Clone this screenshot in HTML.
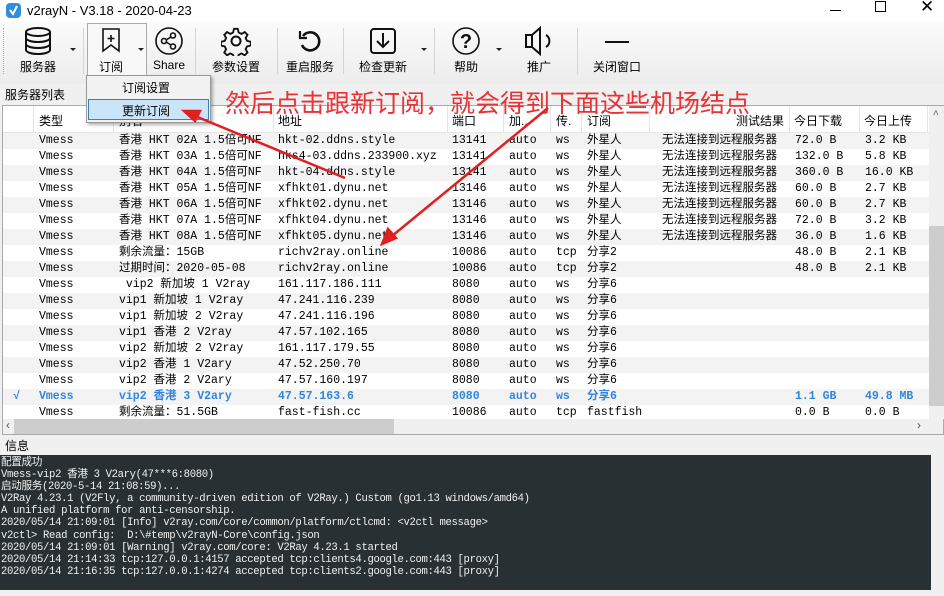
<!DOCTYPE html>
<html><head><meta charset="utf-8"><style>
*{margin:0;padding:0;box-sizing:border-box}
body{width:944px;height:596px;background:#f0f0f0;position:relative;overflow:hidden;font-family:"Liberation Sans","Noto Sans CJK SC",sans-serif;font-size:12px;color:#000}
.abs{position:absolute}
.title{left:0;top:0;width:944px;height:22px;background:#fff}
.tb{left:0;top:22px;width:944px;height:62px;background:linear-gradient(#fbfbfb,#ececec)}
.tbtn{position:absolute;top:0;height:62px;text-align:center;font-size:12px}
.tbtn span{position:absolute;left:0;right:0;top:36px}
.sep{position:absolute;top:6px;width:1px;height:46px;background:#d4d4d4}
.dd{position:absolute;top:26px;width:0;height:0;border-left:3px solid transparent;border-right:3px solid transparent;border-top:3px solid #222}
.table{left:2px;top:105px;width:942px;height:330px;background:#fff;border:1px solid #aaa}
.row{position:absolute;left:0;width:926px;height:16px;font-family:"Liberation Mono","Noto Sans CJK SC",monospace;font-size:11.5px;line-height:16px;white-space:nowrap}
.row.g{background:#f3f3f3}
.row div{position:absolute;top:0}
.hd{position:absolute;top:0;height:27px;left:0;width:926px;background:#fff;border-bottom:1px solid #e5e5e5}
.hd div{position:absolute;top:6px;font-size:12px;white-space:nowrap}
.hd i{position:absolute;top:0;width:1px;height:27px;background:#e5e5e5}
.sel{color:#2f86e0;font-weight:bold}
.log{left:0;top:455px;width:931px;height:135px;background:#283033;color:#f0f0f0;font-family:"Liberation Mono","Noto Sans CJK SC",monospace;font-size:10.6px;line-height:12.1px;padding:2px 0 0 1px;white-space:pre;letter-spacing:-0.35px}
.ann{left:225px;top:87px;color:#e83236;font-size:25px;letter-spacing:0px;font-family:"Noto Sans CJK SC",sans-serif;line-height:30px;white-space:nowrap}
</style></head><body>
<div class="abs title">
<svg class="abs" style="left:6px;top:3px" width="15" height="15"><rect width="15" height="15" rx="4" fill="#2e8fe0"/><path d="M4 7l3 4 4-8" stroke="#fff" stroke-width="2" fill="none"/></svg>
<div class="abs" style="left:27px;top:3px;font-size:13px">v2rayN - V3.18 - 2020-04-23</div>
<div class="abs" style="left:830px;top:10px;width:11px;height:1px;background:#000"></div>
<div class="abs" style="left:875px;top:1px;width:11px;height:11px;border:1px solid #000"></div>
<div class="abs" style="left:920px;top:-3px;font-size:17px">✕</div>
</div>
<div class="abs tb">
<div class="abs" style="left:3px;top:6px;width:1px;height:46px;border-left:1px dotted #aaa"></div>
<div class="tbtn" style="left:8px;width:60px"><svg width="30" height="30" style="margin-top:4px" viewBox="0 0 30 30" fill="none" stroke="#111" stroke-width="2"><ellipse cx="15" cy="6" rx="12" ry="4"/><path d="M3 6v18c0 2 5 4 12 4s12-2 12-4V6M3 12c0 2 5 4 12 4s12-2 12-4M3 18c0 2 5 4 12 4s12-2 12-4"/></svg><span>服务器</span></div>
<div class="dd" style="left:70px"></div>
<div class="sep" style="left:83px"></div>
<div class="abs" style="left:87px;top:1px;width:60px;height:55px;border:1px solid #aaa;background:#f8f8f8"></div>
<div class="tbtn" style="left:88px;width:46px"><svg width="22" height="26" style="margin-top:5px" viewBox="0 0 22 26" fill="none" stroke="#111" stroke-width="1.6"><path d="M3 2h16v22l-8-6-8 6z"/><path d="M11 8v7M7.5 11.5h7"/></svg><span>订阅</span></div>
<div class="dd" style="left:138px"></div>
<div class="tbtn" style="left:148px;width:42px"><svg width="30" height="30" style="margin-top:4px" viewBox="0 0 30 30" fill="none" stroke="#111" stroke-width="1.6"><circle cx="15" cy="15" r="13"/><circle cx="19" cy="9.5" r="2.5"/><circle cx="10" cy="15" r="2.5"/><circle cx="19" cy="20.5" r="2.5"/><path d="M12 14l5-3M12 16l5 3"/></svg><span>Share</span></div>
<div class="sep" style="left:195px"></div>
<div class="tbtn" style="left:206px;width:60px"><svg width="30" height="30" style="margin-top:4px" viewBox="0 0 30 30" fill="none" stroke="#111" stroke-width="2"><circle cx="15" cy="15" r="4.5"/><path d="M13 2h4l1 4 3 1.5 3.5-2 3 3-2 3.5 1.5 3 4 1v4l-4 1-1.5 3 2 3.5-3 3-3.5-2-3 1.5-1 4h-4l-1-4-3-1.5-3.5 2-3-3 2-3.5-1.5-3-4-1v-4l4-1 1.5-3-2-3.5 3-3 3.5 2 3-1.5z" transform="scale(.93) translate(1 1)"/></svg><span>参数设置</span></div>
<div class="sep" style="left:277px"></div>
<div class="tbtn" style="left:282px;width:56px"><svg width="26" height="26" style="margin-top:6px" viewBox="0 0 26 26" fill="none" stroke="#111" stroke-width="2.6"><path d="M6 8a9 9 0 1 1-1 9"/><path d="M3 3v7h7" stroke-width="2.2"/></svg><span>重启服务</span></div>
<div class="sep" style="left:343px"></div>
<div class="tbtn" style="left:352px;width:62px"><svg width="28" height="28" style="margin-top:5px" viewBox="0 0 28 28" fill="none" stroke="#111" stroke-width="2"><rect x="2" y="2" width="24" height="24" rx="3"/><path d="M14 6v14M8 14l6 6 6-6"/></svg><span>检查更新</span></div>
<div class="dd" style="left:421px"></div>
<div class="sep" style="left:434px"></div>
<div class="tbtn" style="left:444px;width:44px"><svg width="30" height="30" style="margin-top:4px" viewBox="0 0 30 30" fill="none" stroke="#111" stroke-width="1.6"><circle cx="15" cy="15" r="13"/><text x="15" y="22" font-size="20" font-weight="bold" text-anchor="middle" fill="#111" stroke="none" font-family="Liberation Sans">?</text></svg><span>帮助</span></div>
<div class="dd" style="left:496px"></div>
<div class="tbtn" style="left:516px;width:46px"><svg width="32" height="30" style="margin-top:4px" viewBox="0 0 32 30" fill="none" stroke="#111" stroke-width="2"><path d="M3 9h6l8-7v26l-8-7H3z M9 9v12"/><path d="M23 9a7 7 0 0 1 0 12"/></svg><span>推广</span></div>
<div class="sep" style="left:577px"></div>
<div class="tbtn" style="left:588px;width:58px"><div style="margin:19px auto 0;width:24px;height:2px;background:#111"></div><span>关闭窗口</span></div>
</div>
<div class="abs" style="left:5px;top:86px;font-size:12px">服务器列表</div>
<div class="abs table">
<div class="hd">
<div style="left:36px">类型</div><div style="left:116px">别名</div><div style="left:275px">地址</div><div style="left:449px">端口</div><div style="left:506px">加..</div><div style="left:553px">传.</div><div style="left:584px">订阅</div><div style="left:733px">测试结果</div><div style="left:791px">今日下载</div><div style="left:861px">今日上传</div>
<i style="left:30px"></i><i style="left:110px"></i><i style="left:270px"></i><i style="left:444px"></i><i style="left:500px"></i><i style="left:547px"></i><i style="left:578px"></i><i style="left:646px"></i><i style="left:786px"></i><i style="left:856px"></i><i style="left:924px"></i>
</div>
<div id="rows"></div>
<div class="abs" style="left:926px;top:0;width:15px;height:313px;background:#f0f0f0"></div>
<div class="abs" style="left:930px;top:2px;font-size:10px;color:#666">˄</div>
<div class="abs" style="left:926px;top:120px;width:15px;height:180px;background:#cdcdcd"></div>
<div class="abs" style="left:0;top:313px;width:940px;height:15px;background:#f0f0f0"></div>
<div class="abs" style="left:11px;top:313px;width:380px;height:15px;background:#cdcdcd"></div>
<div class="abs" style="left:3px;top:312px;font-size:12px;color:#555">‹</div>
<div class="abs" style="left:914px;top:312px;font-size:12px;color:#555">›</div>
</div>
<div class="abs" style="left:5px;top:437px;font-size:12px">信息</div>
<div class="abs log">配置成功
Vmess-vip2 香港 3 V2ary(47***6:8080)
启动服务(2020-5-14 21:08:59)...
V2Ray 4.23.1 (V2Fly, a community-driven edition of V2Ray.) Custom (go1.13 windows/amd64)
A unified platform for anti-censorship.
2020/05/14 21:09:01 [Info] v2ray.com/core/common/platform/ctlcmd: &lt;v2ctl message&gt;
v2ctl&gt; Read config:  D:\#temp\v2rayN-Core\config.json
2020/05/14 21:09:01 [Warning] v2ray.com/core: V2Ray 4.23.1 started
2020/05/14 21:14:33 tcp:127.0.0.1:4157 accepted tcp:clients4.google.com:443 [proxy]
2020/05/14 21:16:35 tcp:127.0.0.1:4274 accepted tcp:clients2.google.com:443 [proxy]</div>
<div class="abs" style="left:931px;top:455px;width:13px;height:135px;background:#f0f0f0"></div>
<div class="abs" style="left:86px;top:75px;width:125px;height:48px;background:#f2f2f2;border:1px solid #999;box-shadow:2px 2px 3px rgba(0,0,0,.3)"></div>
<div class="abs" style="left:122px;top:79px;font-size:12px">订阅设置</div>
<div class="abs" style="left:88px;top:99px;width:121px;height:21px;background:#cce4f7;border:1px solid #3c7fb1"></div>
<div class="abs" style="left:122px;top:102px;font-size:12px">更新订阅</div>
<div class="abs ann">然后点击跟新订阅，就会得到下面这些机场结点</div>
<svg class="abs" style="left:0;top:0" width="944" height="596">
<g stroke="#e02020" stroke-width="2.5" fill="#e02020">
<line x1="345" y1="178" x2="195" y2="116"/><path d="M184 111l16 0-5 10z"/>
<line x1="548" y1="108" x2="392" y2="236"/><path d="M382 244l6-15 8 9z"/>
</g></svg>
<script>
var R=[
["Vmess","香港 HKT 02A 1.5倍可NF","hkt-02.ddns.style","13141","auto","ws","外星人","无法连接到远程服务器","72.0 B","3.2 KB"],
["Vmess","香港 HKT 03A 1.5倍可NF","hks4-03.ddns.233900.xyz","13141","auto","ws","外星人","无法连接到远程服务器","132.0 B","5.8 KB"],
["Vmess","香港 HKT 04A 1.5倍可NF","hkt-04.ddns.style","13141","auto","ws","外星人","无法连接到远程服务器","360.0 B","16.0 KB"],
["Vmess","香港 HKT 05A 1.5倍可NF","xfhkt01.dynu.net","13146","auto","ws","外星人","无法连接到远程服务器","60.0 B","2.7 KB"],
["Vmess","香港 HKT 06A 1.5倍可NF","xfhkt02.dynu.net","13146","auto","ws","外星人","无法连接到远程服务器","60.0 B","2.7 KB"],
["Vmess","香港 HKT 07A 1.5倍可NF","xfhkt04.dynu.net","13146","auto","ws","外星人","无法连接到远程服务器","72.0 B","3.2 KB"],
["Vmess","香港 HKT 08A 1.5倍可NF","xfhkt05.dynu.net","13146","auto","ws","外星人","无法连接到远程服务器","36.0 B","1.6 KB"],
["Vmess","剩余流量：15GB","richv2ray.online","10086","auto","tcp","分享2","","48.0 B","2.1 KB"],
["Vmess","过期时间：2020-05-08","richv2ray.online","10086","auto","tcp","分享2","","48.0 B","2.1 KB"],
["Vmess"," vip2 新加坡 1 V2ray","161.117.186.111","8080","auto","ws","分享6","","",""],
["Vmess","vip1 新加坡 1 V2ray","47.241.116.239","8080","auto","ws","分享6","","",""],
["Vmess","vip1 新加坡 2 V2ray","47.241.116.196","8080","auto","ws","分享6","","",""],
["Vmess","vip1 香港 2 V2ray","47.57.102.165","8080","auto","ws","分享6","","",""],
["Vmess","vip2 新加坡 2 V2ray","161.117.179.55","8080","auto","ws","分享6","","",""],
["Vmess","vip2 香港 1 V2ary","47.52.250.70","8080","auto","ws","分享6","","",""],
["Vmess","vip2 香港 2 V2ary","47.57.160.197","8080","auto","ws","分享6","","",""],
["Vmess","vip2 香港 3 V2ary","47.57.163.6","8080","auto","ws","分享6","","1.1 GB","49.8 MB"],
["Vmess","剩余流量：51.5GB","fast-fish.cc","10086","auto","tcp","fastfish","","0.0 B","0.0 B"]];
var X=[36,116,275,449,506,553,584,659,792,862],h="";
R.forEach(function(r,i){h+='<div class="row'+(i%2==0?' g':'')+(i==16?' sel':'')+'" style="top:'+(27+i*16)+'px">';
if(i==16)h+='<div style="left:10px">√</div>';
r.forEach(function(c,j){h+='<div style="left:'+X[j]+'px">'+c.replace(/ /g,'&nbsp;')+'</div>'});h+='</div>'});
document.getElementById('rows').innerHTML=h;
</script>
</body></html>
